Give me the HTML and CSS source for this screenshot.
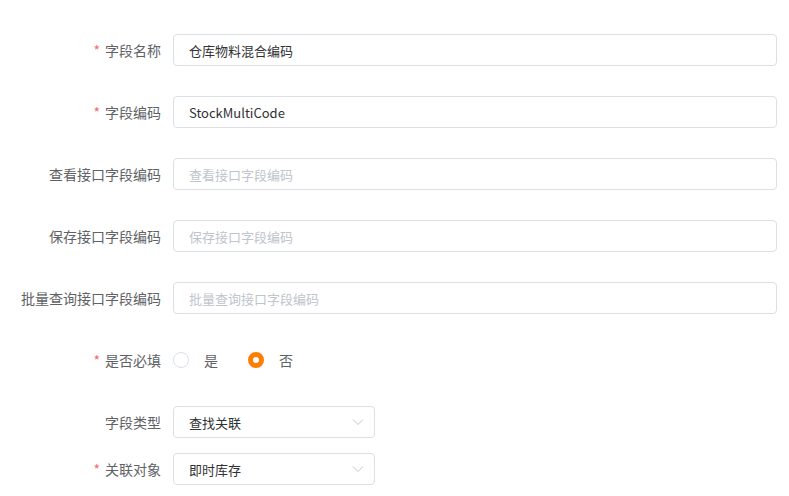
FILE: index.html
```html
<!DOCTYPE html>
<html lang="zh">
    <head>
        <meta charset="UTF-8">
        <title>字段设置</title>
        <link rel="stylesheet" href="styles.css">
    </head>
    <body>
        <form class="form">
            <div class="row">
                <label class="label"><span class="req">*</span>字段名称</label>
                <input class="input" type="text" value="仓库物料混合编码">
            </div>
            <div class="row">
                <label class="label"><span class="req">*</span>字段编码</label>
                <input class="input" type="text" value="StockMultiCode">
            </div>
            <div class="row">
                <label class="label">查看接口字段编码</label>
                <input class="input" type="text" placeholder="查看接口字段编码">
            </div>
            <div class="row">
                <label class="label">保存接口字段编码</label>
                <input class="input" type="text" placeholder="保存接口字段编码">
            </div>
            <div class="row">
                <label class="label">批量查询接口字段编码</label>
                <input class="input" type="text" placeholder="批量查询接口字段编码">
            </div>
            <div class="row">
                <label class="label"><span class="req">*</span>是否必填</label>
                <div class="radios">
                    <span class="radio"><i class="dot"></i>是</span>
                    <span class="radio"><i class="dot on"></i>否</span>
                </div>
            </div>
            <div class="row">
                <label class="label">字段类型</label>
                <div class="select">查找关联
                    <svg width="12" height="8" viewBox="0 0 12 8"><path d="M1 1.5l5 5 5-5" fill="none" stroke="#c0c4cc" stroke-width="1"/></svg>
                </div>
            </div>
            <div class="row tight">
                <label class="label"><span class="req">*</span>关联对象</label>
                <div class="select">即时库存
                    <svg width="12" height="8" viewBox="0 0 12 8"><path d="M1 1.5l5 5 5-5" fill="none" stroke="#c0c4cc" stroke-width="1"/></svg>
                </div>
            </div>
        </form>
    </body>
</html>
```

FILE: styles.css
```css
body {
    margin: 0;
    background: #fff;
    font-family: 'Noto Sans CJK SC', 'Noto Sans', sans-serif;
    font-size: 13px;
    color: #606266;
}

.form {
    padding: 34px 12px 0 0;
}

.row {
    display: flex;
    align-items: center;
    height: 32px;
    margin-bottom: 30px;
}

.row.tight {
    margin-top: -15px;
}

.label {
    flex: none;
    width: 173px;
    padding-right: 12px;
    box-sizing: border-box;
    text-align: right;
    font-size: 14px;
}

.req {
    color: #f56c6c;
    margin-right: 5px;
}

.input {
    flex: 1;
    height: 32px;
    box-sizing: border-box;
    border: 1px solid #dcdfe6;
    border-radius: 4px;
    padding: 0 15px;
    font-family: inherit;
    font-size: 13px;
    color: #303133;
    outline: none;
}

.input::placeholder {
    color: #c0c4cc;
}

.radios {
    display: flex;
    gap: 30px;
}

.radio {
    display: flex;
    align-items: center;
    color: #606266;
    font-size: 14px;
}

.dot {
    width: 16px;
    height: 16px;
    box-sizing: border-box;
    border: 1px solid #dcdfe6;
    border-radius: 50%;
    margin-right: 15px;
}

.dot.on {
    border: 5px solid #ff7d00;
}

.select {
    width: 202px;
    height: 32px;
    box-sizing: border-box;
    border: 1px solid #dcdfe6;
    border-radius: 4px;
    padding: 0 10px 0 15px;
    display: flex;
    align-items: center;
    justify-content: space-between;
    color: #303133;
}
```
